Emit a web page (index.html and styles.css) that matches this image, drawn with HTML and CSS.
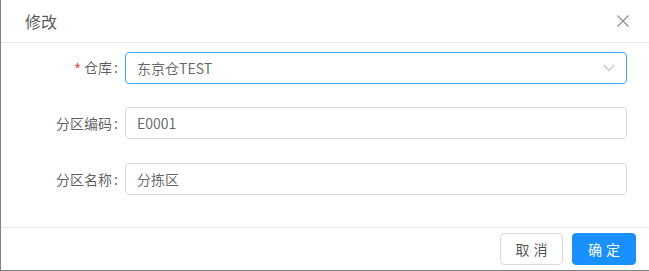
FILE: index.html
```html
<!DOCTYPE html>
<html lang="zh-CN">
<head>
<meta charset="utf-8">
<title>修改</title>
<link rel="stylesheet" href="styles.css">
</head>
<body>
<div class="modal">
  <div class="modal-header">
    <div class="modal-title">修改</div>
    <button class="modal-close" aria-label="Close">
      <svg width="12" height="12" viewBox="0 0 12 12"><path d="M0.5 0.5 L11.5 11.5 M11.5 0.5 L0.5 11.5" stroke="#8c8c8c" stroke-width="1.1" fill="none"/></svg>
    </button>
  </div>
  <div class="modal-body">
    <form class="form">
      <div class="form-item">
        <label class="form-label"><span class="required">*</span>仓库<span class="colon">:</span></label>
        <div class="select focused">
          <span class="select-value">东京仓TEST</span>
          <svg class="select-arrow" width="12" height="8" viewBox="0 0 12 8"><path d="M0.8 0.8 L6 6.6 L11.2 0.8" stroke="#bfbfbf" stroke-width="1.2" fill="none"/></svg>
        </div>
      </div>
      <div class="form-item">
        <label class="form-label">分区编码<span class="colon">:</span></label>
        <input class="input" type="text" value="E0001">
      </div>
      <div class="form-item">
        <label class="form-label">分区名称<span class="colon">:</span></label>
        <input class="input" type="text" value="分拣区">
      </div>
    </form>
  </div>
  <div class="modal-footer">
    <button class="btn">取消</button>
    <button class="btn btn-primary">确定</button>
  </div>
</div>
</body>
</html>
```
FILE: styles.css
```css
* { box-sizing: border-box; }
html, body {
  margin: 0;
  padding: 0;
  background: #ffffff;
}
body {
  width: 649px;
  height: 271px;
  overflow: hidden;
  font-family: "Noto Sans CJK SC", "Noto Sans", sans-serif;
  font-size: 14px;
  color: rgba(0, 0, 0, 0.65);
}
.modal {
  width: 649px;
  height: 271px;
  border-left: 1px solid #808080;
  border-bottom: 1px solid #808080;
  background: #fff;
  display: flex;
  flex-direction: column;
}
.modal-header {
  height: 43px;
  padding: 10px 20px 10px 24px;
  border-bottom: 1px solid #e8e8e8;
  display: flex;
  align-items: center;
  justify-content: space-between;
}
.modal-title {
  font-size: 16px;
  line-height: 22px;
  color: rgba(0, 0, 0, 0.68);
}
.modal-close {
  border: 0;
  background: transparent;
  padding: 0;
  width: 12px;
  height: 12px;
  display: flex;
}
.modal-body {
  height: 184px;
  padding: 8px 22px 8px 0;
}
.form-item {
  display: grid;
  grid-template-columns: 124px 1fr;
  align-items: center;
  height: 32px;
  margin-bottom: 24px;
}
.form-label {
  text-align: right;
  color: rgba(0, 0, 0, 0.65);
  font-size: 14px;
  line-height: 32px;
  white-space: nowrap;
}
.required {
  color: #f5222d;
  margin-right: 4px;
  font-family: "Liberation Sans", sans-serif;
  font-size: 14px;
}
.colon {
  margin: 0 7px 0 2px;
}
.select, .input {
  height: 32px;
  border: 1px solid #d9d9d9;
  border-radius: 4px;
  padding: 0 11px;
  font-family: inherit;
  font-size: 14px;
  color: rgba(0, 0, 0, 0.62);
  background: #fff;
  width: 100%;
  outline: none;
}
.select {
  display: flex;
  align-items: center;
  justify-content: space-between;
}
.select.focused {
  border-color: #40a9ff;
}
.modal-footer {
  height: 43px;
  border-top: 1px solid #e8e8e8;
  padding: 5px 13px 0 0;
  display: flex;
  justify-content: flex-end;
  gap: 9px;
}
.btn {
  height: 32px;
  width: 63px;
  padding: 0 0 0 4px;
  letter-spacing: 4px;
  border: 1px solid #d9d9d9;
  border-radius: 4px;
  background: #fff;
  font-family: inherit;
  font-size: 14px;
  color: rgba(0, 0, 0, 0.7);
}
.btn-primary {
  width: 64px;
  background: #1890ff;
  border-color: #1890ff;
  color: #fff;
}
```
